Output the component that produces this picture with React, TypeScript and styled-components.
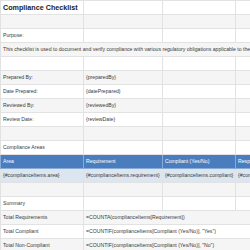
import React from 'react';
import styled, {createGlobalStyle} from 'styled-components';

const GlobalStyle = createGlobalStyle`
	html, body {
		margin: 0;
		padding: 0;
		background: #ffffff;
		overflow: hidden;
	}
	body {
		font-family: "Liberation Sans", Arial, sans-serif;
	}
`;

const Sheet = styled.table`
	border-collapse: collapse;
	table-layout: fixed;
	width: 320px;
	font-size: 5.15px;
	color: #3a3a3a;
`;

const Row = styled.tr<{$kind?: 'head' | 'data'}>`
	height: 14px;
	background: ${p => (p.$kind === 'head' ? '#4a7dbd' : p.$kind === 'data' ? '#dce6f1' : '#ffffff')};
	&:nth-child(even) {
		background: ${p => (p.$kind === 'head' ? '#4a7dbd' : p.$kind === 'data' ? '#dce6f1' : '#f5f5f5')};
	}
`;

const Cell = styled.td<{$head?: boolean}>`
	border: 1px solid ${p => (p.$head ? '#8aaad6' : '#e2e2e2')};
	padding: 0 2px;
	white-space: nowrap;
	overflow: hidden;
	vertical-align: middle;
	line-height: 13px;
	color: ${p => (p.$head ? '#ffffff' : '#3a3a3a')};
`;

const Spill = styled(Cell)`
	overflow: visible;
`;

const Title = styled(Cell)`
	font-size: 7.2px;
	font-weight: bold;
	color: #222222;
`;

const fields = [
	['Prepared By:', '{preparedBy}'],
	['Date Prepared:', '{datePrepared}'],
	['Reviewed By:', '{reviewedBy}'],
	['Review Date:', '{reviewDate}'],
];

const totals = [
	['Total Requirements', '=COUNTA(complianceItems[Requirement])'],
	['Total Compliant', '=COUNTIF(complianceItems[Compliant (Yes/No)], "Yes")'],
	['Total Non-Compliant', '=COUNTIF(complianceItems[Compliant (Yes/No)], "No")'],
];

const Blank = () => (
	<>
		<Cell />
		<Cell />
		<Cell />
		<Cell />
	</>
);

export default function App() {
	return (
		<>
			<GlobalStyle />
			<Sheet>
				<colgroup>
					<col style={{width: 83}} />
					<col style={{width: 79}} />
					<col style={{width: 73}} />
					<col style={{width: 85}} />
				</colgroup>
				<tbody>
					<Row>
						<Title>Compliance Checklist</Title>
						<Cell />
						<Cell />
						<Cell />
					</Row>
					<Row>
						<Blank />
					</Row>
					<Row>
						<Cell>Purpose:</Cell>
						<Cell />
						<Cell />
						<Cell />
					</Row>
					<Row>
						<Spill colSpan={4}>
							This checklist is used to document and verify compliance with various regulatory obligations applicable to the organization.
						</Spill>
					</Row>
					<Row>
						<Blank />
					</Row>
					{fields.map(([label, value]) => (
						<Row key={label}>
							<Cell>{label}</Cell>
							<Cell>{value}</Cell>
							<Cell />
							<Cell />
						</Row>
					))}
					<Row>
						<Blank />
					</Row>
					<Row>
						<Cell>Compliance Areas</Cell>
						<Cell />
						<Cell />
						<Cell />
					</Row>
					<Row $kind="head">
						<Cell $head>Area</Cell>
						<Cell $head>Requirement</Cell>
						<Cell $head>Compliant (Yes/No)</Cell>
						<Cell $head>Responsible Party</Cell>
					</Row>
					<Row $kind="data">
						<Cell>{'{#complianceItems.area}'}</Cell>
						<Cell>{'{#complianceItems.requirement}'}</Cell>
						<Cell>{'{#complianceItems.compliant}'}</Cell>
						<Cell>{'{#complianceItems.responsible}'}</Cell>
					</Row>
					<Row>
						<Blank />
					</Row>
					<Row>
						<Cell>Summary</Cell>
						<Cell />
						<Cell />
						<Cell />
					</Row>
					{totals.map(([label, value]) => (
						<Row key={label}>
							<Cell>{label}</Cell>
							<Spill colSpan={3}>{value}</Spill>
						</Row>
					))}
				</tbody>
			</Sheet>
		</>
	);
}
